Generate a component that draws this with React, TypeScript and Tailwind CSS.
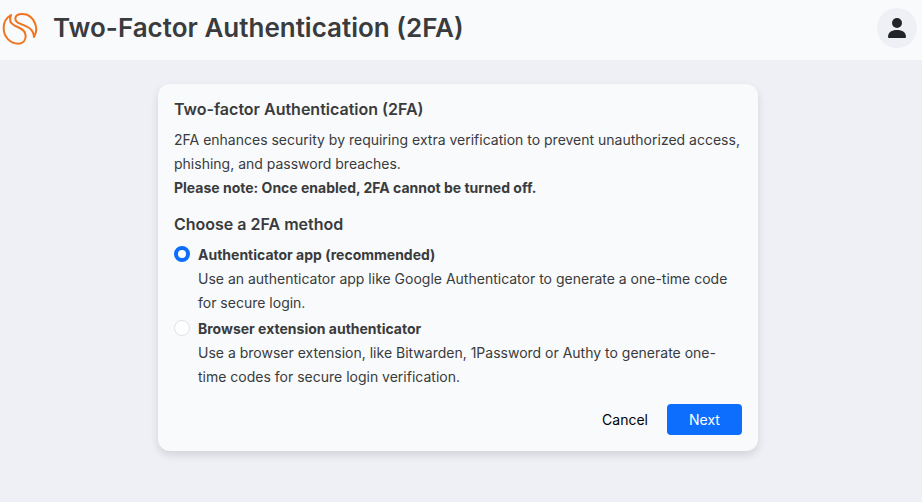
import React, { useState } from 'react';

interface Method {
  id: string;
  title: string;
  description: string;
}

const methods: Method[] = [
  {
    id: 'app',
    title: 'Authenticator app (recommended)',
    description:
      'Use an authenticator app like Google Authenticator to generate a one-time code for secure login.',
  },
  {
    id: 'extension',
    title: 'Browser extension authenticator',
    description:
      'Use a browser extension, like Bitwarden, 1Password or Authy to generate one-time codes for secure login verification.',
  },
];

function Logo() {
  return (
    <svg
      viewBox="6 36 108 102"
      className="w-9 h-[34px] mt-0.5 flex-shrink-0"
      fill="none"
      stroke="#f0741f"
      strokeWidth="6"
      strokeLinejoin="round"
      aria-hidden="true"
    >
      <path d="M33 45 C19 53 11 67 11 84 C11 112 32 131 55 131 C69 131 77 121 77 109 C77 97 70 89 59 84 L44 77 C30 70 27 59 33 45 Z" />
      <path d="M102 111 C110 98 110 82 105 70 C98 53 84 42 67 42 C53 42 46 48 46 56 C46 63 51 67 60 71 L79 79 C94 85 101 95 102 111 Z" />
    </svg>
  );
}

function Header() {
  return (
    <header className="h-15 flex items-center justify-between bg-[#f8fafc] pl-0.5 pr-[5px] pb-1">
      <div className="flex items-center gap-[15px]">
        <Logo />
        <h1 className="text-[26px] leading-8 font-semibold">Two-Factor Authentication (2FA)</h1>
      </div>
      <button
        type="button"
        aria-label="Account"
        className="w-10 h-10 rounded-full bg-[#eff0f6] flex items-center justify-center cursor-pointer"
      >
        <svg viewBox="0 0 20 22" className="w-5 h-[22px]" fill="#212529" aria-hidden="true">
          <circle cx="10" cy="6" r="5" />
          <path d="M1 20 C1 15.500 4.500 13 10 13 C15.500 13 19 15.500 19 20 Q19 21 18 21 H2 Q1 21 1 20 Z" />
        </svg>
      </button>
    </header>
  );
}

export default function App() {
  const [selected, setSelected] = useState('app');

  return (
    <div className="min-h-screen bg-[#eff0f6] text-[#3a3b3d] font-['Inter',sans-serif]">
      <Header />

      <main className="pt-6 pb-6 pr-1.5">
        <form
          onSubmit={(e) => e.preventDefault()}
          className="max-w-[600px] mx-auto p-4 rounded-xl bg-[#f8fafc] shadow-[0_4px_8px_rgba(0,0,0,0.12)]"
        >
          <h2 className="text-base leading-[18px] font-semibold mb-2.5">Two-factor Authentication (2FA)</h2>
          <p className="text-sm leading-6">
            2FA enhances security by requiring extra verification to prevent unauthorized access,
            phishing, and password breaches.
          </p>
          <p className="text-sm leading-6 font-bold">
            Please note: Once enabled, 2FA cannot be turned off.
          </p>

          <fieldset className="mt-[15px]">
            <legend className="text-base leading-[18px] font-semibold mb-2.5">Choose a 2FA method</legend>
            <div className="flex flex-col gap-0.5">
              {methods.map((method) => (
                <div key={method.id} className="flex items-start gap-2">
                  <input
                    type="radio"
                    id={method.id}
                    name="method"
                    checked={selected === method.id}
                    onChange={() => setSelected(method.id)}
                    className="appearance-none w-4 h-4 mt-[3px] flex-shrink-0 rounded-full bg-white border border-[#dee2e6] checked:border-4 checked:border-[#0d6efd]"
                  />
                  <div className="text-sm leading-6">
                    <label htmlFor={method.id} className="block font-bold">
                      {method.title}
                    </label>
                    <p>{method.description}</p>
                  </div>
                </div>
              ))}
            </div>
          </fieldset>

          <div className="mt-[15px] flex items-center justify-end gap-[7px] text-sm leading-5">
            <button type="button" className="h-[31px] px-3 text-black cursor-pointer">
              Cancel
            </button>
            <button
              type="submit"
              className="h-[31px] w-[75px] rounded bg-[#0d6efd] text-white cursor-pointer"
            >
              Next
            </button>
          </div>
        </form>
      </main>
    </div>
  );
}
